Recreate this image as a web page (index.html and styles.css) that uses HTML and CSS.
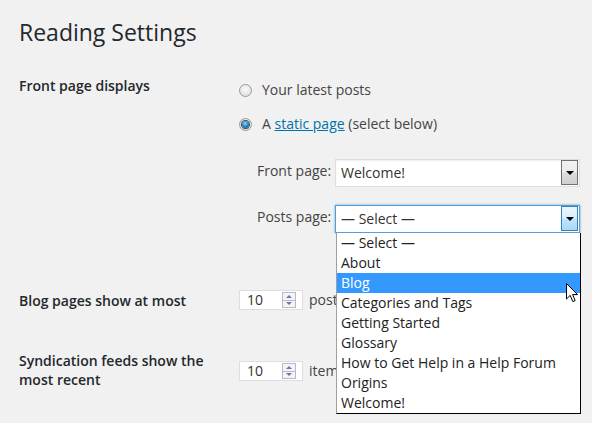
FILE: index.html
```html
<!DOCTYPE html>
<html>
<head>
<meta charset="utf-8">
<link rel="stylesheet" href="styles.css">
</head>
<body>
<div class="wrap">
  <h1>Reading Settings</h1>
  <div class="row row-front">
    <div class="label">Front page displays</div>
    <div class="field">
      <div class="radio-line"><span class="radio"></span>Your latest posts</div>
      <div class="radio-line second"><span class="radio checked"></span>A&nbsp;<a class="link">static page</a>&nbsp;(select below)</div>
      <div class="pages">
        <div class="page-row">
          <span class="plabel">Front page:</span>
          <div class="select"><span class="val">Welcome!</span><span class="btn"><span class="tri"></span></span></div>
        </div>
        <div class="page-row second-sel">
          <span class="plabel">Posts page:</span>
          <div class="select focus"><span class="val">— Select —</span><span class="btn"><span class="tri"></span></span>
            <ul class="dropdown">
              <li>— Select —</li>
              <li>About</li>
              <li class="hl">Blog</li>
              <li>Categories and Tags</li>
              <li>Getting Started</li>
              <li>Glossary</li>
              <li>How to Get Help in a Help Forum</li>
              <li>Origins</li>
              <li>Welcome!</li>
            </ul>
            <svg class="cursor" width="13" height="20" viewBox="0 0 13 20"><path d="M0.5 0.5 L0.5 16 L4.2 12.4 L6.8 18.6 L9.2 17.6 L6.6 11.6 L11.6 11.6 Z" fill="#fff" stroke="#000" stroke-width="1" stroke-linejoin="miter"/></svg>
          </div>
        </div>
      </div>
    </div>
  </div>
  <div class="row row-blog">
    <div class="label">Blog pages show at most</div>
    <div class="field num-field">
      <div class="num"><span class="numval">10</span><span class="spin"><span class="up"></span><span class="down"></span></span></div>
      <span class="unit">posts</span>
    </div>
  </div>
  <div class="row row-feed">
    <div class="label two">Syndication feeds show the most recent</div>
    <div class="field num-field">
      <div class="num"><span class="numval">10</span><span class="spin"><span class="up"></span><span class="down"></span></span></div>
      <span class="unit">items</span>
    </div>
  </div>
</div>
</body>
</html>
```

FILE: styles.css
```css
* { box-sizing: border-box; }
html, body { overflow: hidden; }
body {
  margin: 0;
  background: #f1f1f1;
  font-family: "Open Sans", sans-serif;
  font-size: 14px;
  color: #444;
  height: 423px;
}
.wrap { padding-left: 19px; }
h1 {
  margin: 18px 0 0;
  font-size: 23px;
  font-weight: 400;
  line-height: 29px;
  color: #23282d;
}
.row {
  display: grid;
  grid-template-columns: 220px 1fr;
  align-items: start;
}
.label {
  font-weight: 600;
  color: #23282d;
  line-height: 20px;
}
.row-front { margin-top: 29px; }
.row-front .field { padding-top: 4px; }
.radio-line {
  display: flex;
  align-items: center;
  height: 20px;
  line-height: 20px;
  white-space: nowrap;
}
.radio-line.second { margin-top: 14px; }
.radio {
  width: 13px;
  height: 13px;
  border-radius: 50%;
  border: 1px solid #9a9a9a;
  background: radial-gradient(circle at 50% 40%, #fafafa 0%, #e6e6e6 60%, #d4d4d4 100%);
  margin-right: 10px;
  margin-top: 1px;
  display: flex;
  align-items: center;
  justify-content: center;
}
.radio.checked::after {
  content: "";
  width: 7px;
  height: 7px;
  border-radius: 50%;
  background: radial-gradient(circle at 45% 35%, #8fdcff 0%, #2a8fd0 45%, #0b3e6a 100%);
  box-shadow: 0 0 0 1px #3a4a5a;
}
.link { color: #0073aa; text-decoration: underline; }
.pages { margin-top: 25px; padding-left: 18px; }
.page-row {
  display: flex;
  align-items: flex-start;
  height: 28px;
}
.page-row.second-sel { margin-top: 18px; }
.plabel {
  width: 78px;
  line-height: 24px;
  white-space: nowrap;
  color: #444;
}
.select {
  position: relative;
  width: 245px;
  height: 28px;
  border: 1px solid #ddd;
  background: #fff;
  box-shadow: inset 0 1px 2px rgba(0,0,0,.07);
  display: flex;
  justify-content: space-between;
}
.select.focus {
  border-color: #5b9dd9;
  box-shadow: 0 0 2px rgba(30,140,190,.8);
}
.val {
  padding-left: 5px;
  line-height: 26px;
  color: #333;
}
.btn {
  width: 17px;
  height: 25px;
  margin: 0 1px 0 0;
  border: 1px solid #707070;
  background: linear-gradient(#f2f2f2 0%, #ebebeb 48%, #dddddd 52%, #cfcfcf 100%);
  display: flex;
  align-items: center;
  justify-content: center;
}
.focus .btn {
  border-color: #3c7fb1;
  background: linear-gradient(#eaf6fd 0%, #d9f0fc 48%, #bee6fd 52%, #a7d9f5 100%);
}
.tri {
  width: 0;
  height: 0;
  border-left: 4px solid transparent;
  border-right: 4px solid transparent;
  border-top: 4px solid #000;
  margin-top: 1px;
}
.dropdown {
  position: absolute;
  left: 0;
  top: calc(100% + 1px);
  width: 245px;
  margin: 0;
  padding: 0;
  list-style: none;
  background: #fff;
  border: 1px solid #000;
  border-left-color: #a0a0a0;
  border-top: none;
  z-index: 5;
}
.dropdown li {
  height: 20px;
  line-height: 20px;
  padding-left: 4px;
  color: #222;
  white-space: nowrap;
}
.dropdown li.hl { background: #3399ff; color: #fff; }
.cursor {
  position: absolute;
  left: 230px;
  top: 77px;
  z-index: 6;
}
.row-blog { margin-top: 57px; }
.row-blog .label { margin-top: 1px; }
.num-field {
  display: flex;
  align-items: center;
  height: 20px;
}
.num {
  width: 64px;
  height: 20px;
  border: 1px solid #ddd;
  background: #fff;
  display: flex;
  justify-content: space-between;
  align-items: center;
  padding: 0 6px 0 7px;
}
.numval { line-height: 18px; color: #333; }
.spin {
  width: 14px;
  height: 16px;
  display: flex;
  flex-direction: column;
  border: 1px solid #b8b8c8;
  background: #f4f4f6;
}
.spin span {
  flex: 1;
  display: flex;
  align-items: center;
  justify-content: center;
}
.spin .up { border-bottom: 1px solid #b8b8c8; }
.spin .up::after {
  content: "";
  border-left: 3px solid transparent;
  border-right: 3px solid transparent;
  border-bottom: 3px solid #6a78a8;
}
.spin .down::after {
  content: "";
  border-left: 3px solid transparent;
  border-right: 3px solid transparent;
  border-top: 3px solid #6a78a8;
}
.unit { margin-left: 6px; line-height: 20px; }
.row-feed { margin-top: 40px; }
.label.two { line-height: 19px; width: 200px; }
.row-feed .field { margin-top: 10px; }
```
